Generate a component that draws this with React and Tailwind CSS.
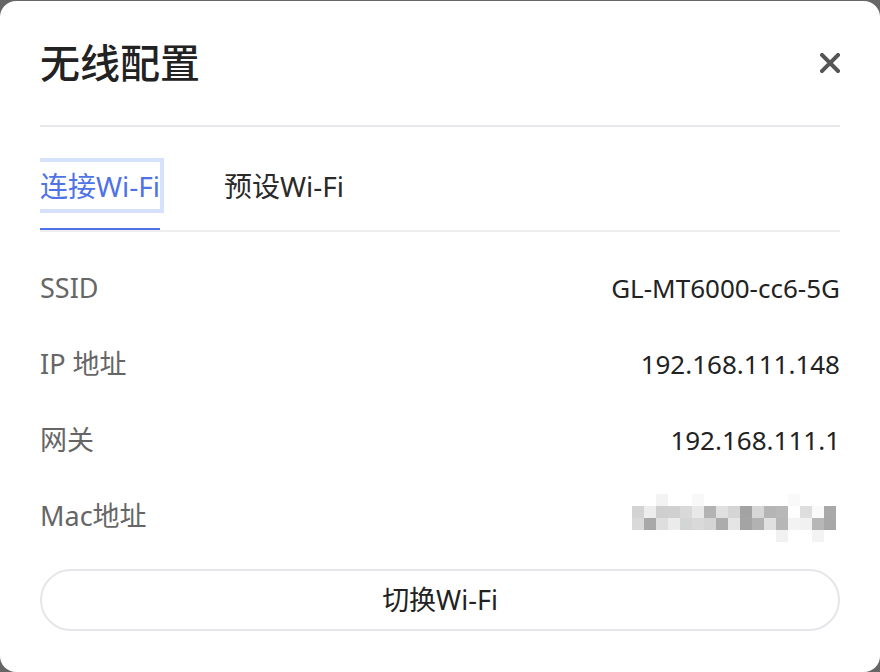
import { useState } from "react";

const font = { fontFamily: '"Noto Sans", "Noto Sans CJK SC", sans-serif' };

const rows = [
  { label: "SSID", value: "GL-MT6000-cc6-5G" },
  { label: "IP 地址", value: "192.168.111.148" },
  { label: "网关", value: "192.168.111.1" },
  { label: "Mac地址", value: null },
];

// masked MAC address, drawn as a mosaic of grey cells
const mosaic = [
  ["", "", "bg-[#f3f3f3]", "", "", "bg-[#f8f8f8]", "", "", "", "", "", "", "", "bg-[#f9f9f9]", "", "", ""],
  ["bg-[#d3d3d3]", "bg-[#ededed]", "bg-[#cfcfcf]", "bg-[#d0d0d0]", "bg-[#d9d9d9]", "bg-[#e8e8e8]", "bg-[#b3b3b3]", "bg-[#e0e0e0]", "bg-[#d5d5d5]", "bg-[#a3a3a3]", "bg-[#d7d7d7]", "bg-[#b5b5b5]", "bg-[#b8b8b8]", "bg-[#fefefe]", "bg-[#dedede]", "bg-[#fafafa]", "bg-[#a9a9a9]"],
  ["bg-[#d9d9d9]", "bg-[#a8a8a8]", "bg-[#dedede]", "bg-[#ebebeb]", "bg-[#d4d6d5]", "bg-[#d9d9d9]", "bg-[#d5d5d5]", "bg-[#acacac]", "bg-[#e5e5e5]", "bg-[#a4a4a4]", "bg-[#b2b2b2]", "bg-[#e0e0e0]", "bg-[#b6b6b6]", "bg-[#f3f3f3]", "bg-[#f1f1f1]", "bg-[#b7b7b7]", "bg-[#a8a8a8]"],
  ["", "", "", "", "", "", "", "", "", "", "", "", "bg-[#f1f1f1]", "", "", "bg-[#f3f3f3]", ""],
];

function Mosaic() {
  return (
    <div className="flex flex-col">
      {mosaic.map((line, i) => (
        <div key={i} className="flex">
          {line.map((c, j) => (
            <div key={j} className={`h-[12px] w-[12px] ${c}`} />
          ))}
        </div>
      ))}
    </div>
  );
}

export default function App() {
  const [tab, setTab] = useState(0);
  const tabs = ["连接Wi-Fi", "预设Wi-Fi"];

  return (
    <div className="h-[672px] w-[880px] bg-[#666666] pt-px" style={font}>
      <div className="flex h-[671px] flex-col rounded-2xl bg-white px-10">
        <div className="flex h-[124px] items-center justify-between">
          <h1 className="text-[40px] font-medium leading-none text-[#222]">无线配置</h1>
          <button className="flex h-8 w-8 items-center justify-end">
            <svg width="20" height="20" viewBox="0 0 20 20">
              <path d="M2 2L18 18M18 2L2 18" stroke="#555" strokeWidth="4" strokeLinecap="square" />
            </svg>
          </button>
        </div>
        <div className="h-[2px] bg-[#e8e8ec]" />

        <div className="flex overflow-hidden border-b-2 border-[#eeeef1] pt-[35px]">
          {tabs.map((t, i) => (
            <div key={t} className="-mb-[2px] mr-[64px] flex flex-col">
              <button
                onClick={() => setTab(i)}
                className={`h-[47px] text-[28px] leading-none ${
                  i === tab
                    ? "text-[#4f72e6] outline-4 outline-[#d5e1fd] outline-solid"
                    : "text-[#2a2a2a]"
                }`}
              >
                {t}
              </button>
              <div className={`mt-[19px] h-[4px] ${i === tab ? "bg-[#4f72e8]" : ""}`} />
            </div>
          ))}
        </div>

        <div className="mt-[18px] flex flex-col">
          {rows.map((r) => (
            <div key={r.label} className="flex h-[76px] items-center justify-between text-[27px]">
              <span className="text-[#666]">{r.label}</span>
              {r.value ? <span className="text-[26px] text-[#222]">{r.value}</span> : <div className="mr-1 mt-1"><Mosaic /></div>}
            </div>
          ))}
        </div>

        <button className="mt-[15px] h-[62px] rounded-full border-2 border-[#e6e6ea] text-[27px] text-[#222]">
          切换Wi-Fi
        </button>
      </div>
    </div>
  );
}
